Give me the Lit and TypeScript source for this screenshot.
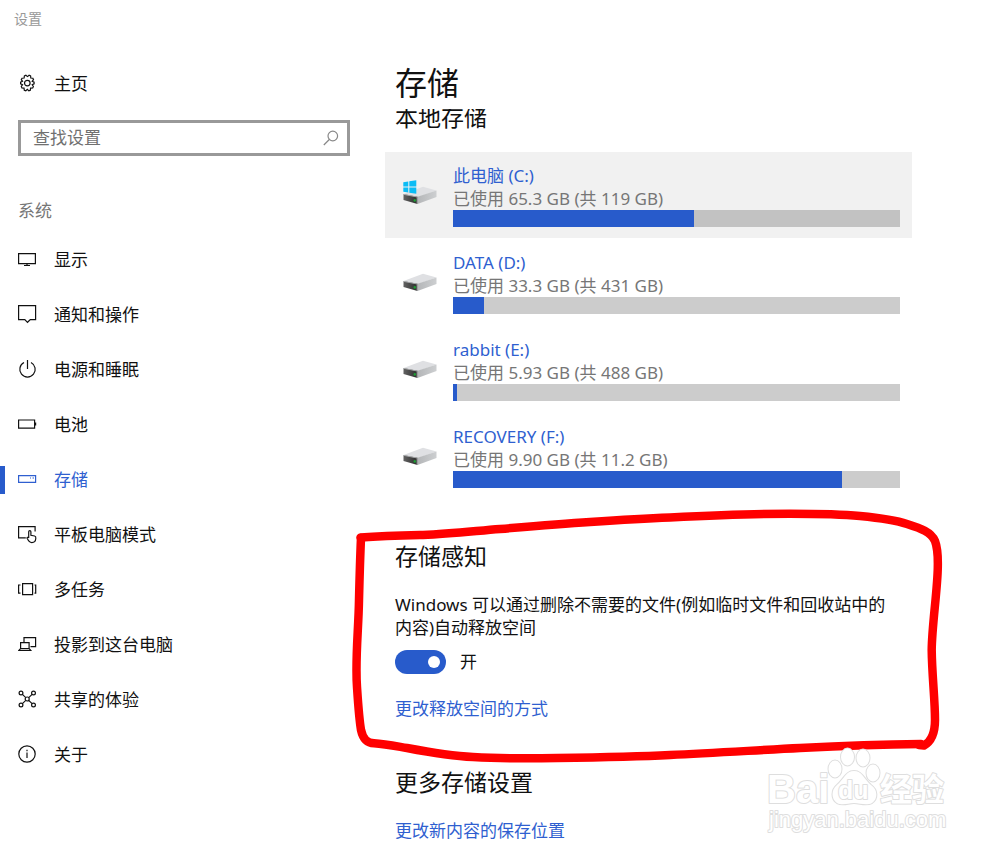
import { LitElement, html, svg, css } from "lit";
import { customElement, property, state } from "lit/decorators.js";
import { classMap } from "lit/directives/class-map.js";

const icons: Record<string, unknown> = {
  home: svg`<path d="M7.900 1.300l1.600 1.300 1.600-1.300 1.500.6.200 2.100 2.100.2.600 1.500-1.300 1.600 0 0 1.900.9v1.700l-1.900.9 1.200 1.700-.7 1.500-2.100.1-.3 2.100-1.500.6-1.400-1.400-1.600 1.400-1.500-.6-.3-2.100-2.100-.2-.6-1.500 1.200-1.600-1.900-.9V8.200l1.900-.9-1.200-1.600.7-1.500 2.100-.2.300-2.100z"/><circle cx="9.300" cy="9.100" r="2.800"/>`,
  display: svg`<path d="M.6 3.600h16.800v10H.6zM9 13.600v2M6 15.500h6"/>`,
  notify: svg`<path d="M.6 .6h17v14h-5.300L9.500 17.300 6.800 14.600H.6z"/>`,
  power: svg`<path d="M9.500 0v9M6 2.500a7.700 7.700 0 1 0 7 0"/>`,
  battery: svg`<path d="M.6 5h16v8.200H.6zM17.600 7.600v3"/>`,
  storage: svg`<path d="M.6 5.600h17v6.800H.6zM12 8h1M14.500 8h1.500"/>`,
  tablet: svg`<path d="M7.800 12.900H.6V1.600h16.500v5M10.700 13V6.800a1.100 1.100 0 0 1 2.200 0v3.500l3.700.7q1.500.4 1.200 2.500c-.2 2.500-1.500 4.100-4 4.100-2.200 0-3.200-1.300-4.700-4.300-.4-1.100.8-1.500 1.600-.3"/>`,
  multitask: svg`<path d="M4.600 3.600h10v11h-10zM2.500 5H.6v8.200h1.900M16.500 5h1.200v8.200h-1.200"/>`,
  project: svg`<path d="M6 7V2.600h11.600v9H12.500M2.600 7.600h8.500v6H2.600zM2.500 13.600L.8 15.500h12L11.200 13.600"/>`,
  shared: svg`<circle cx="3" cy="3" r="1.900"/><circle cx="15.500" cy="3" r="1.900"/><circle cx="3" cy="15" r="1.900"/><circle cx="15.500" cy="15" r="1.900"/><circle cx="9.200" cy="9" r="2"/><path d="M4.400 4.400l3.400 3.200M14.100 4.400l-3.400 3.200M4.400 13.600l3.400-3.200M14.100 13.600l-3.400-3.200"/>`,
  about: svg`<circle cx="9" cy="9" r="8.200"/><path d="M9 7.500v5.500M9 4.800v1.400"/>`,
};

const navItems = [
  ["display", "显示"],
  ["notify", "通知和操作"],
  ["power", "电源和睡眠"],
  ["battery", "电池"],
  ["storage", "存储"],
  ["tablet", "平板电脑模式"],
  ["multitask", "多任务"],
  ["project", "投影到这台电脑"],
  ["shared", "共享的体验"],
  ["about", "关于"],
];

interface Drive {
  name: string;
  used: string;
  percent: number;
  system?: boolean;
}

const drives: Drive[] = [
  { name: "此电脑 (C:)", used: "已使用 65.3 GB (共 119 GB)", percent: 54, system: true },
  { name: "DATA (D:)", used: "已使用 33.3 GB (共 431 GB)", percent: 7 },
  { name: "rabbit (E:)", used: "已使用 5.93 GB (共 488 GB)", percent: 1 },
  { name: "RECOVERY (F:)", used: "已使用 9.90 GB (共 11.2 GB)", percent: 87 },
];

@customElement("nav-item")
class NavItem extends LitElement {
  @property() icon = "";
  @property() label = "";
  @property({ type: Boolean }) active = false;

  static styles = css`
    :host { display: block; }
    .item {
      display: flex;
      align-items: center;
      height: 55px;
      color: #111;
      text-decoration: none;
    }
    .marker { width: 5px; height: 28px; margin-right: 13px; }
    .icon { width: 19px; height: 19px; margin-right: 17px; fill: none; stroke: currentColor; stroke-width: 1.2; }
    .active { color: #2f5fd0; }
    .active .marker { background: #285bcb; }
  `;

  render() {
    return html`<a href="#" class=${classMap({ item: true, active: this.active })}>
      <span class="marker"></span>
      <svg class="icon" viewBox="0 0 19 19" aria-hidden="true">${icons[this.icon]}</svg>
      <span>${this.label}</span>
    </a>`;
  }
}

@customElement("drive-row")
class DriveRow extends LitElement {
  @property({ attribute: false }) drive!: Drive;

  static styles = css`
    :host { display: block; }
    .row {
      display: grid;
      grid-template-columns: 34px minmax(0, 1fr);
      column-gap: 16px;
      align-items: center;
      padding: 12px 12px 11px 18px;
      line-height: 23px;
      text-decoration: none;
      color: #767676;
    }
    .system { background: #f1f1f1; }
    .icon { display: block; width: 34px; height: 32px; }
    .name { color: #2f5fd0; }
    .bar { height: 17px; background: #ccc; }
    .system .bar { background: #c2c2c2; }
    .fill { height: 100%; background: #285bcb; }
  `;

  render() {
    const d = this.drive;
    return html`<a href="#" class=${classMap({ row: true, system: !!d.system })}>
      <svg class="icon" viewBox="0 0 34 32" aria-hidden="true">
        <defs>
          <linearGradient id="side" x1="0" x2="1"><stop offset="0" stop-color="#b4b6b8"/><stop offset="1" stop-color="#cdcfd1"/></linearGradient>
          <linearGradient id="front" x1="0" x2="1"><stop offset="0" stop-color="#626262"/><stop offset="1" stop-color="#2c2c2c"/></linearGradient>
        </defs>
        <path d="M.5 14L20 6.800 33.500 10.500 15 17z" fill="#dfe0e3"/>
        <path d="M14.500 16.800L33.500 10.500v6.500L14.500 24z" fill="url(#side)"/>
        <path d="M.5 14l14 2.800V24L.5 20z" fill="url(#front)"/>
        <path d="M.5 14l14 2.800v.8l-14-2.800zM13.700 16.800h.8V24l-.8-.2z" fill="#b5b7b9"/>
        <circle cx="11.800" cy="20.400" r="1.300" fill="#1f9a33"/>
        ${d.system
          ? svg`<path d="M.3 2.300l5-.8V6.500h-5zM6.300 1.300L13.300.3v6.200h-7zM.3 7.500h5v5l-5-.8zM6.300 7.500h7v6.200l-7-1z" fill="#0bbcf5"/>`
          : null}
      </svg>
      <div>
        <div class="name">${d.name}</div>
        <div>${d.used}</div>
        <div class="bar" role="progressbar" aria-label=${d.name} aria-valuenow=${d.percent}>
          <div class="fill" style="width:${d.percent}%"></div>
        </div>
      </div>
    </a>`;
  }
}

@customElement("app-root")
class AppRoot extends LitElement {
  @state() private senseOn = true;

  static styles = css`
    :host {
      display: block;
      position: relative;
      overflow: hidden;
      min-height: 100vh;
      background: #fff;
      color: #111;
      font: 17px/24px "Noto Sans", "Noto Sans CJK SC", sans-serif;
    }
    .layout { display: grid; grid-template-columns: 385px minmax(0, 1fr); }
    .titlebar { padding: 7px 14px; font-size: 14px; color: #999; }
    .home { display: block; margin-top: 18px; }
    .search {
      display: flex;
      align-items: center;
      box-sizing: border-box;
      height: 36px;
      margin: 9px 35px 0 18px;
      padding: 0 8px 0 12px;
      border: 3px solid #999;
    }
    .query {
      flex: 1;
      min-width: 0;
      padding: 0;
      border: 0;
      outline: 0;
      background: none;
      font: inherit;
      color: inherit;
    }
    .query::placeholder { color: #707070; opacity: 1; }
    .lens { width: 16px; height: 16px; fill: none; stroke: #888; stroke-width: 1.2; }
    .group { margin: 43px 18px 9px; font-size: 17px; font-weight: 400; color: #767676; }
    .main { padding: 59px 88px 0 0; }
    .title { margin: 0 10px 2px; font-size: 32px; line-height: 48px; font-weight: 400; }
    .scroller { overflow: hidden; }
    .heading { margin: 0 10px; font-size: 23px; line-height: 28px; font-weight: 400; }
    .local { margin-top: -6px; }
    .drives { display: grid; row-gap: 1px; margin-top: 21px; }
    .sense { margin-top: 43px; }
    .text { margin: 23px 20px 11px 10px; line-height: 23px; }
    .switch { display: flex; align-items: center; gap: 14px; margin: 0 10px; }
    .toggle {
      appearance: none;
      display: flex;
      align-items: center;
      box-sizing: border-box;
      width: 51px;
      height: 24px;
      margin: 0;
      padding: 0 6px;
      border-radius: 12px;
      background: #999;
    }
    .toggle::before { content: ""; width: 12px; height: 12px; border-radius: 50%; background: #fff; }
    .toggle:checked { justify-content: flex-end; background: #285bcb; }
    .link { display: block; margin: 23px 10px 0; line-height: 23px; color: #2f5fd0; text-decoration: none; }
    .more { margin-top: 48px; }
    .marks { position: absolute; top: 0; left: 0; width: 1000px; height: 854px; pointer-events: none; }
    .ink { fill: none; stroke: #f00; stroke-width: 8.500; stroke-linecap: round; stroke-linejoin: round; }
    .stamp { fill: #fff; stroke: #dedede; stroke-width: 2; stroke-linejoin: round; paint-order: stroke; font-family: "Liberation Sans", "Noto Sans CJK SC", sans-serif; }
    .brand { font-size: 40px; font-weight: 700; }
    .brand-cn { font-size: 32px; font-weight: 700; }
    .brand-du { font-size: 25px; font-weight: 700; }
    .site { font-size: 22px; }
  `;

  render() {
    return html`
      <div class="layout">
        <aside>
          <div class="titlebar">设置</div>
          <nav-item class="home" icon="home" label="主页"></nav-item>
          <label class="search">
            <input class="query" type="text" placeholder="查找设置" aria-label="查找设置" />
            <svg class="lens" viewBox="0 0 16 16" aria-hidden="true"><circle cx="9.800" cy="6" r="4.800"/><path d="M6.300 9.500L.8 15"/></svg>
          </label>
          <h2 class="group">系统</h2>
          <nav>
            ${navItems.map(([icon, label]) => html`<nav-item icon=${icon} label=${label} ?active=${icon === "storage"}></nav-item>`)}
          </nav>
        </aside>
        <main class="main">
          <h1 class="title">存储</h1>
          <div class="scroller">
            <h2 class="heading local">本地存储</h2>
            <div class="drives">${drives.map((d) => html`<drive-row .drive=${d}></drive-row>`)}</div>
            <h2 class="heading sense">存储感知</h2>
            <p class="text">Windows 可以通过删除不需要的文件(例如临时文件和回收站中的内容)自动释放空间</p>
            <label class="switch">
              <input
                class="toggle"
                type="checkbox"
                role="switch"
                .checked=${this.senseOn}
                @change=${(e: Event) => (this.senseOn = (e.target as HTMLInputElement).checked)}
              />
              <span>${this.senseOn ? "开" : "关"}</span>
            </label>
            <a class="link" href="#">更改释放空间的方式</a>
            <h2 class="heading more">更多存储设置</h2>
            <a class="link" href="#">更改新内容的保存位置</a>
          </div>
        </main>
      </div>
      <svg class="marks" viewBox="0 0 1000 854">
        <path class="ink" d="M360.500 537.500C385 536 405 535.500 423 535C450 534 475 531 500 529C530 526.500 560 524 590 522C620 520 645 518.500 670 517.500C710 515.500 750 513.700 790 513.700C815 513.700 840 514 860 516C880 518 895 520 907 524C921 528.500 931 532 935 541C938 549 938 558 937.800 567C937.500 590 932 625 931.700 650C932 675 935 700 935 720C935 733 932 741 924 745.500L919 745"/>
        <path class="ink" d="M361 538C360 560 359.500 580 359 600C358.500 630 355 660 357 687C358 702 359 718 361 730C363 739 367 743 374 743.300C385 744 395 746 407 748C428 752 450 756 473 757C500 758.500 530 758.500 557 758C595 757.500 633 757 670 755C715 753 760 750 800 748C840 746 880 744.500 921 744"/>
        <g class="stamp">
          <text class="brand" x="767" y="803">Bai</text>
          <ellipse cx="835" cy="769" rx="6.500" ry="8.500"/>
          <ellipse cx="847.500" cy="757" rx="6.500" ry="8.500"/>
          <ellipse cx="863" cy="758" rx="6.500" ry="8.500"/>
          <ellipse cx="873" cy="773" rx="6.500" ry="8.500"/>
          <path d="M854 771C862 771 864 779 871 785C878 790 878 799 872 803C866 806 860 803 854 803C848 803 843 806 837 803C831 799 831 790 837 785C844 779 846 771 854 771z"/>
          <text class="brand-du" x="838" y="799">du</text>
          <text class="brand-cn" x="880" y="801">经验</text>
          <text class="site" x="769" y="827">jingyan.baidu.com</text>
        </g>
      </svg>
    `;
  }
}
